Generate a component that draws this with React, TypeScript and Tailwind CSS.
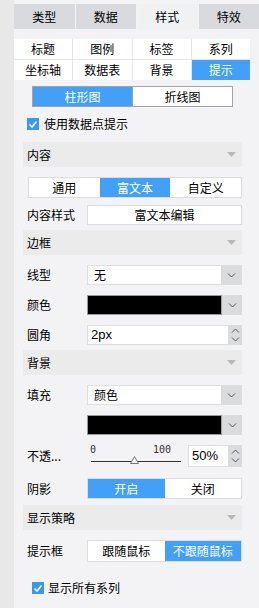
import React from 'react';

const font = { fontFamily: '"Noto Sans CJK SC", "Liberation Sans", sans-serif' };

const Chevron: React.FC<{ up?: boolean }> = ({ up }) => (
  <svg width="9" height="5" viewBox="0 0 9 5">
    <polyline
      points={up ? '1,4.5 4.5,1 8,4.5' : '1,0.5 4.5,4 8,0.5'}
      fill="none"
      stroke="#555"
      strokeWidth="1"
    />
  </svg>
);

const Check: React.FC = () => (
  <span className="flex h-[12px] w-[12px] items-center justify-center bg-[#3d97f0]">
    <svg width="10" height="9" viewBox="0 0 10 9">
      <polyline points="1.5,4.5 4,7 8.5,1.5" fill="none" stroke="#fff" strokeWidth="1.6" />
    </svg>
  </span>
);

const SectionHeader: React.FC<{ title: string }> = ({ title }) => (
  <div className="flex h-[25px] items-center justify-between bg-[#ebebeb] pl-[4px] pr-[6px]">
    <span>{title}</span>
    <svg width="9" height="5" viewBox="0 0 9 5">
      <polygon points="0,0 9,0 4.5,5" fill="#b8b8b8" />
    </svg>
  </div>
);

const Row: React.FC<{ label: string; children: React.ReactNode; className?: string }> = ({ label, children, className }) => (
  <div className={'flex items-center ' + (className ?? '')}>
    <div className="w-[64px] pl-[4px]">{label}</div>
    <div className="flex flex-1">{children}</div>
  </div>
);

const Select: React.FC<{ children?: React.ReactNode }> = ({ children }) => (
  <div className="flex h-[20px] flex-1 border border-[#dedede] bg-white">
    <div className="flex-1 pl-[6px] leading-[18px]">{children}</div>
    <div className="flex w-[20px] items-center justify-center bg-[#dadbdd]">
      <Chevron />
    </div>
  </div>
);

const ColorSelect: React.FC = () => (
  <div className="flex h-[20px] flex-1 bg-[#dadbdd]">
    <div className="flex-1 border border-[#9b9b9b] bg-black" />
    <div className="flex w-[20px] items-center justify-center">
      <Chevron />
    </div>
  </div>
);

const Spinner: React.FC = () => (
  <div className="flex w-[13px] flex-col items-center justify-center gap-[4px] bg-[#dadbdd]">
    <Chevron up />
    <Chevron />
  </div>
);

const App: React.FC = () => {
  const topTabs = ['类型', '数据', '样式', '特效'];
  const subTabs = ['标题', '图例', '标签', '系列', '坐标轴', '数据表', '背景', '提示'];

  return (
    <div className="flex h-[608px] w-[259px] text-[12px] text-black" style={font}>
      <div className="w-[14px] bg-[#e8e8e8]" />
      <div className="flex flex-1 flex-col bg-[#f3f3f5]">
        {/* top tabs */}
        <div className="mt-[4px] grid h-[25px] grid-cols-4 gap-px">
          {topTabs.map((t) => (
            <div
              key={t}
              className={
                t === '样式'
                  ? 'flex items-center justify-center bg-[#f0f1f3]'
                  : 'flex items-center justify-center bg-[#d9dadd]'
              }
            >
              {t}
            </div>
          ))}
        </div>

        {/* sub tabs */}
        <div className="mt-[10px] grid w-[236px] grid-cols-4 gap-px bg-[#e6e6e6]">
          {subTabs.map((t) => (
            <div
              key={t}
              className={
                t === '提示'
                  ? 'flex h-[20px] items-center justify-center bg-[#42a0f8] text-white'
                  : 'flex h-[20px] items-center justify-center bg-white'
              }
            >
              {t}
            </div>
          ))}
        </div>

        {/* chart type toggle */}
        <div className="ml-[18px] mt-[6px] flex h-[21px] w-[201px] border border-[#a3a3a3]">
          <div className="flex flex-1 items-center justify-center bg-[#42a0f8] text-white">柱形图</div>
          <div className="flex flex-1 items-center justify-center border-l border-[#a3a3a3] bg-white">折线图</div>
        </div>

        <div className="ml-[13px] mt-[8px] flex items-center gap-[5px]">
          <Check />
          <span>使用数据点提示</span>
        </div>

        <div className="ml-[9px] w-[219px]">
          <div className="mt-[9px]">
            <SectionHeader title="内容" />
          </div>

          <div className="ml-[5px] mt-[10px] flex h-[21px] border border-[#dcdcdc] bg-white">
            <div className="flex flex-1 items-center justify-center">通用</div>
            <div className="flex flex-1 items-center justify-center bg-[#42a0f8] text-white">富文本</div>
            <div className="flex flex-1 items-center justify-center">自定义</div>
          </div>

          <Row label="内容样式" className="mt-[7px]">
            <div className="flex h-[20px] flex-1 items-center justify-center border border-[#dcdcdc] bg-white">
              富文本编辑
            </div>
          </Row>

          <div className="mt-[5px]">
            <SectionHeader title="边框" />
          </div>

          <Row label="线型" className="mt-[10px]">
            <Select>无</Select>
          </Row>

          <Row label="颜色" className="mt-[10px]">
            <ColorSelect />
          </Row>

          <Row label="圆角" className="mt-[10px]">
            <div className="flex h-[20px] flex-1">
              <div
                className="flex-1 border border-[#dedede] bg-white pl-[3px] text-[13px] leading-[18px]"
                style={{ fontFamily: '"Liberation Sans", sans-serif' }}
              >
                2px
              </div>
              <Spinner />
            </div>
          </Row>

          <div className="mt-[5px]">
            <SectionHeader title="背景" />
          </div>

          <Row label="填充" className="mt-[10px]">
            <Select>颜色</Select>
          </Row>

          <Row label="" className="mt-[10px]">
            <ColorSelect />
          </Row>

          <Row label="不透..." className="mt-[10px]">
            <div className="flex h-[22px] flex-1 items-end">
              <div className="relative h-[22px] w-[100px]">
                <span
                  className="absolute left-[3px] top-[-3px] text-[10px] text-[#333]"
                  style={{ fontFamily: '"DejaVu Sans Mono", monospace' }}
                >
                  0
                </span>
                <span
                  className="absolute left-[66px] top-[-3px] text-[10px] text-[#333]"
                  style={{ fontFamily: '"DejaVu Sans Mono", monospace' }}
                >
                  100
                </span>
                <div className="absolute left-[4px] top-[16px] h-px w-[90px] bg-[#333]" />
                <svg className="absolute left-[43px] top-[11px]" width="9" height="8" viewBox="0 0 9 8">
                  <polygon points="4.5,0.5 8.5,7.5 0.5,7.5" fill="#f3f3f5" stroke="#777" strokeWidth="1" />
                </svg>
              </div>
              <div className="ml-[1px] flex h-[22px] flex-1">
                <div
                  className="flex-1 border border-[#dedede] bg-white pl-[3px] text-[13px] leading-[20px]"
                  style={{ fontFamily: '"Liberation Sans", sans-serif' }}
                >
                  50%
                </div>
                <Spinner />
              </div>
            </div>
          </Row>

          <Row label="阴影" className="mt-[11px]">
            <div className="flex h-[21px] flex-1 border border-[#dcdcdc] bg-white">
              <div className="flex flex-1 items-center justify-center bg-[#42a0f8] text-white">开启</div>
              <div className="flex flex-1 items-center justify-center">关闭</div>
            </div>
          </Row>

          <div className="mt-[6px]">
            <SectionHeader title="显示策略" />
          </div>

          <Row label="提示框" className="mt-[10px]">
            <div className="flex h-[22px] flex-1 border border-[#dcdcdc] bg-white">
              <div className="flex flex-1 items-center justify-center">跟随鼠标</div>
              <div className="flex flex-1 items-center justify-center bg-[#42a0f8] text-white">不跟随鼠标</div>
            </div>
          </Row>

          <div className="ml-[9px] mt-[17px] flex items-center gap-[4px]">
            <Check />
            <span>显示所有系列</span>
          </div>
        </div>
      </div>
    </div>
  );
};

export default App;
